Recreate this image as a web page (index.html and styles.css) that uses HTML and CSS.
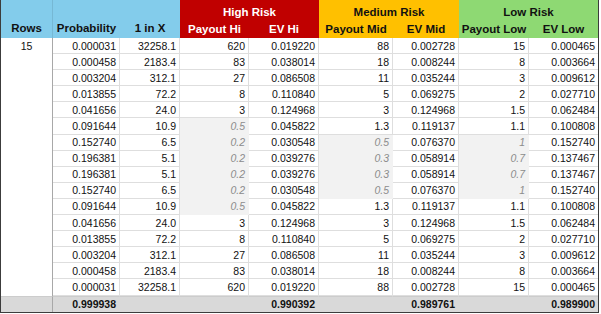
FILE: index.html
```html
<!DOCTYPE html>
<html lang="en">
<head>
    <meta charset="UTF-8">
    <meta name="viewport" content="width=device-width, initial-scale=1.0">
    <title>Payout Table</title>
    <link rel="stylesheet" href="styles.css">
</head>
<body>
    <table class="sheet">
        <colgroup>
            <col class="c-rows">
            <col class="c-prob">
            <col class="c-odds">
            <col class="c-pay-hi">
            <col class="c-ev-hi">
            <col class="c-pay-mid">
            <col class="c-ev-mid">
            <col class="c-pay-low">
            <col class="c-ev-low">
        </colgroup>
        <thead>
            <tr class="band">
                <th class="blue rows-head" rowspan="2">Rows</th>
                <th class="blue low" rowspan="2">Probability</th>
                <th class="blue low" rowspan="2">1 in X</th>
                <th class="red" colspan="2">High Risk</th>
                <th class="orange" colspan="2">Medium Risk</th>
                <th class="green" colspan="2">Low Risk</th>
            </tr>
            <tr class="sub">
                <th class="red">Payout Hi</th>
                <th class="red">EV Hi</th>
                <th class="orange">Payout Mid</th>
                <th class="orange">EV Mid</th>
                <th class="green">Payout Low</th>
                <th class="green">EV Low</th>
            </tr>
        </thead>
        <tbody>
            <tr>
                <td class="rows" rowspan="16">15</td>
                <td>0.000031</td><td>32258.1</td>
                <td>620</td><td>0.019220</td>
                <td>88</td><td>0.002728</td>
                <td>15</td><td>0.000465</td>
            </tr>
            <tr>
                <td>0.000458</td><td>2183.4</td>
                <td>83</td><td>0.038014</td>
                <td>18</td><td>0.008244</td>
                <td>8</td><td>0.003664</td>
            </tr>
            <tr>
                <td>0.003204</td><td>312.1</td>
                <td>27</td><td>0.086508</td>
                <td>11</td><td>0.035244</td>
                <td>3</td><td>0.009612</td>
            </tr>
            <tr>
                <td>0.013855</td><td>72.2</td>
                <td>8</td><td>0.110840</td>
                <td>5</td><td>0.069275</td>
                <td>2</td><td>0.027710</td>
            </tr>
            <tr>
                <td>0.041656</td><td>24.0</td>
                <td>3</td><td>0.124968</td>
                <td>3</td><td>0.124968</td>
                <td>1.5</td><td>0.062484</td>
            </tr>
            <tr>
                <td>0.091644</td><td>10.9</td>
                <td class="loss">0.5</td><td>0.045822</td>
                <td>1.3</td><td>0.119137</td>
                <td>1.1</td><td>0.100808</td>
            </tr>
            <tr>
                <td>0.152740</td><td>6.5</td>
                <td class="loss">0.2</td><td>0.030548</td>
                <td class="loss">0.5</td><td>0.076370</td>
                <td class="loss">1</td><td>0.152740</td>
            </tr>
            <tr>
                <td>0.196381</td><td>5.1</td>
                <td class="loss">0.2</td><td>0.039276</td>
                <td class="loss">0.3</td><td>0.058914</td>
                <td class="loss">0.7</td><td>0.137467</td>
            </tr>
            <tr>
                <td>0.196381</td><td>5.1</td>
                <td class="loss">0.2</td><td>0.039276</td>
                <td class="loss">0.3</td><td>0.058914</td>
                <td class="loss">0.7</td><td>0.137467</td>
            </tr>
            <tr>
                <td>0.152740</td><td>6.5</td>
                <td class="loss">0.2</td><td>0.030548</td>
                <td class="loss">0.5</td><td>0.076370</td>
                <td class="loss">1</td><td>0.152740</td>
            </tr>
            <tr>
                <td>0.091644</td><td>10.9</td>
                <td class="loss">0.5</td><td>0.045822</td>
                <td>1.3</td><td>0.119137</td>
                <td>1.1</td><td>0.100808</td>
            </tr>
            <tr>
                <td>0.041656</td><td>24.0</td>
                <td>3</td><td>0.124968</td>
                <td>3</td><td>0.124968</td>
                <td>1.5</td><td>0.062484</td>
            </tr>
            <tr>
                <td>0.013855</td><td>72.2</td>
                <td>8</td><td>0.110840</td>
                <td>5</td><td>0.069275</td>
                <td>2</td><td>0.027710</td>
            </tr>
            <tr>
                <td>0.003204</td><td>312.1</td>
                <td>27</td><td>0.086508</td>
                <td>11</td><td>0.035244</td>
                <td>3</td><td>0.009612</td>
            </tr>
            <tr>
                <td>0.000458</td><td>2183.4</td>
                <td>83</td><td>0.038014</td>
                <td>18</td><td>0.008244</td>
                <td>8</td><td>0.003664</td>
            </tr>
            <tr>
                <td>0.000031</td><td>32258.1</td>
                <td>620</td><td>0.019220</td>
                <td>88</td><td>0.002728</td>
                <td>15</td><td>0.000465</td>
            </tr>
        </tbody>
        <tfoot>
            <tr class="total">
                <td class="rows"></td>
                <td>0.999938</td><td></td>
                <td></td><td>0.990392</td>
                <td></td><td>0.989761</td>
                <td></td><td>0.989900</td>
            </tr>
        </tfoot>
    </table>
</body>
</html>
```

FILE: styles.css
```css
* {
    margin: 0;
    padding: 0;
    box-sizing: border-box;
}

body {
    background: #ffffff;
    font-family: "Liberation Sans", Arial, sans-serif;
    color: #111111;
}

.sheet {
    table-layout: fixed;
    border-collapse: separate;
    border-spacing: 0;
    width: 599px;
    border-left: 1px solid #3c3c3c;
    border-right: 1px solid #3c3c3c;
    border-bottom: 1px solid #3c3c3c;
}

.c-rows { width: 52px; }
.c-prob { width: 67px; }
.c-odds { width: 60px; }
.c-pay-hi { width: 69px; }
.c-ev-hi { width: 70px; }
.c-pay-mid { width: 74px; }
.c-ev-mid { width: 66px; }
.c-pay-low { width: 70px; }
.c-ev-low { width: 69px; }

/* header bands */
th {
    font-size: 11.5px;
    font-weight: 700;
    text-align: center;
    white-space: nowrap;
    line-height: 14px;
    color: #111111;
}

.band {
    height: 21px;
}

.sub {
    height: 17px;
}

.band th {
    padding-top: 2px;
}

.sub th {
    padding-bottom: 2px;
}

.blue {
    background: #83cceb;
    vertical-align: bottom;
    padding-bottom: 3px;
}

.rows-head {
    border-right: 1px solid #76b8d4;
}

.red {
    background: #c00000;
    color: #ffffff;
}

.orange {
    background: #ffc000;
}

.green {
    background: #8ed973;
}

/* data cells */
td {
    font-size: 10.5px;
    line-height: 14px;
    text-align: right;
    padding: 0 3px 0 0;
    white-space: nowrap;
    border-right: 1px solid #dedede;
    border-bottom: 1px solid #dedede;
}

tbody tr,
tfoot tr {
    height: 16.1px;
}

td:last-child {
    border-right: none;
}

td.rows {
    text-align: center;
    vertical-align: top;
    padding: 1px 0 0;
    border-right: 1px solid #a8a8a8;
    border-bottom: none;
}

td.loss {
    background: #f2f2f2;
    color: #8c8c8c;
    font-style: italic;
    border-color: #f2f2f2;
}

.total td {
    background: #d9d9d9;
    font-weight: 700;
    border-right-color: #d9d9d9;
    border-bottom: none;
    border-top: 1px solid #cccccc;
}

.total td.rows {
    border-right: 1px solid #a8a8a8;
    border-top: 1px solid #cccccc;
}
```
